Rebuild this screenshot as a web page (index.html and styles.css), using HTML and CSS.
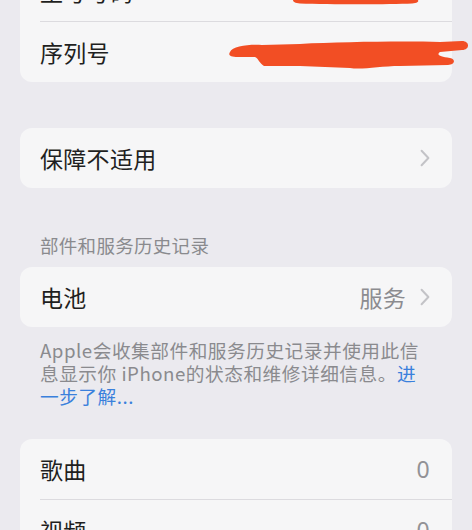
FILE: index.html
```html
<!DOCTYPE html>
<html lang="zh-CN">
<head>
<meta charset="utf-8">
<link rel="stylesheet" href="styles.css">
</head>
<body>
<div class="page">
  <div class="card first">
    <div class="row"><span class="label">型号号码</span></div>
    <div class="row sep"><span class="label">序列号</span></div>
  </div>

  <div class="card gap-lg">
    <div class="row">
      <span class="label">保障不适用</span>
      <span class="right"><svg class="chev" viewBox="0 0 10 18" width="10" height="18"><polyline points="1.6,1.8 8.4,9 1.6,16.2" fill="none" stroke="#c3c3c7" stroke-width="2" stroke-linecap="round" stroke-linejoin="round"/></svg></span>
    </div>
  </div>

  <div class="header">部件和服务历史记录</div>
  <div class="card">
    <div class="row">
      <span class="label">电池</span>
      <span class="right"><span class="value">服务</span><svg class="chev" viewBox="0 0 10 18" width="10" height="18"><polyline points="1.6,1.8 8.4,9 1.6,16.2" fill="none" stroke="#c3c3c7" stroke-width="2" stroke-linecap="round" stroke-linejoin="round"/></svg></span>
    </div>
  </div>
  <div class="footer">Apple会收集部件和服务历史记录并使用此信息显示你 iPhone的状态和维修详细信息。<span class="link">进一步了解...</span></div>

  <div class="card gap-md">
    <div class="row"><span class="label">歌曲</span><span class="right"><span class="value num">0</span></span></div>
    <div class="row sep"><span class="label">视频</span><span class="right"><span class="value num">0</span></span></div>
  </div>
</div>

<svg class="redact" viewBox="0 0 472 530" width="472" height="530">
  <path d="M293,0 L418,0 C419,2 417,3 412,3.5 C390,4.5 330,4.5 300,3.5 C295,3 293,2 293,0 Z" fill="#f24e24"/>
  <path d="M230,52 C232,46 250,44 262,45 L300,44 C340,42 400,41 440,42 L462,41 C470,41 470,50 462,50 L440,52 C436,55 440,57 450,58 C456,59 455,65 448,65 L400,66 C380,66 362,70 350,68 L300,66 L264,66 C259,63 259,59 255,57 L238,57 C230,57 228,55 230,52 Z" fill="#f24e24"/>
</svg>
</body>
</html>
```

FILE: styles.css
```css
html, body {
  margin: 0;
  padding: 0;
}
body {
  background: #ebeaef;
  width: 472px;
  height: 530px;
  overflow: hidden;
  position: relative;
  font-family: "Noto Sans CJK SC", "Noto Sans", sans-serif;
}
.page {
  padding: 0 20px;
  display: flex;
  flex-direction: column;
}
.card {
  background: #f6f6f7;
  border-radius: 12px;
  overflow: hidden;
}
.card.first {
  margin-top: -39px;
  border-radius: 0 0 12px 12px;
}
.card.gap-lg {
  margin-top: 46px;
}
.card.gap-md {
  margin-top: 32px;
}
.row {
  height: 60px;
  display: flex;
  align-items: center;
  justify-content: space-between;
  padding: 0 22px 0 20px;
  position: relative;
}
.row.sep {
  border-top: 1px solid #dcdbdf;
  margin-left: 20px;
  padding-left: 0;
}
.label {
  font-size: 23px;
  color: #1f1f21;
  letter-spacing: 0.3px;
}
.right {
  display: flex;
  align-items: center;
  gap: 14px;
}
.value {
  font-size: 23px;
  color: #8c8c90;
  letter-spacing: 0.3px;
}
.num {
  font-family: "Noto Sans", sans-serif;
  color: #929296;
}
.chev {
  display: block;
}
.header {
  margin-top: 46px;
  margin-bottom: 11px;
  padding-left: 20px;
  font-size: 18.5px;
  line-height: 22px;
  color: #8a8a8e;
  letter-spacing: 0.3px;
}
.footer {
  margin-top: 11px;
  padding: 0 22px 0 20px;
  font-size: 18.7px;
  line-height: 23px;
  color: #8a8a8e;
  letter-spacing: 0.5px;
}
.link {
  color: #3a80dc;
}
.redact {
  position: absolute;
  top: 0;
  left: 0;
  pointer-events: none;
}
```
